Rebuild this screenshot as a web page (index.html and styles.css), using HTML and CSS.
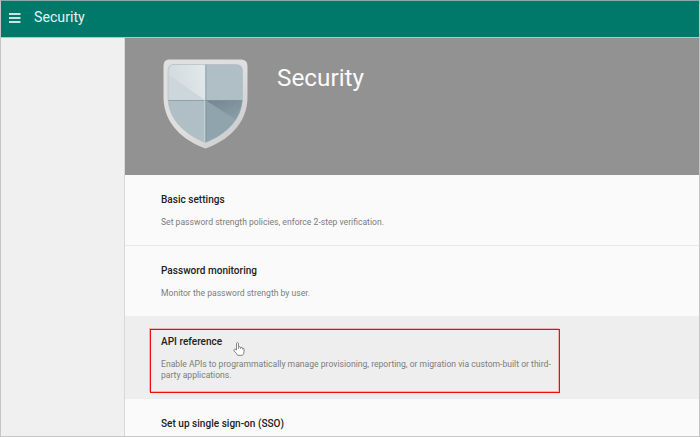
FILE: index.html
```html
<!DOCTYPE html>
<html lang="en">
<head>
<meta charset="utf-8">
<title>Security</title>
<link rel="stylesheet" href="styles.css">
</head>
<body>
<div class="app">
  <header class="topbar">
    <svg class="menu" width="12" height="10" viewBox="0 0 12 10"><path d="M0 1h11.500M0 5h11.500M0 9h11.500" stroke="#c8e4e0" stroke-width="1.800"/></svg>
    <span class="topbar-title">Security</span>
  </header>
  <div class="body">
    <aside class="side"></aside>
    <main class="main">
      <section class="hero">
        <svg class="shield" width="86" height="92" viewBox="0 0 86 92">
          <defs>
            <linearGradient id="rim" x1="0" y1="0" x2="1" y2="1"><stop offset="0" stop-color="#e0e0e0"/><stop offset=".55" stop-color="#dedede"/><stop offset="1" stop-color="#c6c6c6"/></linearGradient>
            <linearGradient id="shine" x1="0" y1=".6" x2="1" y2=".3"><stop offset="0" stop-color="#cdd7db"/><stop offset="1" stop-color="#e3e9eb"/></linearGradient>
            <linearGradient id="shade" x1="0" y1="0" x2=".7" y2="1"><stop offset="0" stop-color="#748791"/><stop offset="1" stop-color="#90a4ae"/></linearGradient>
            <clipPath id="inner"><path d="M11 5.500H73Q79.500 5.500 79.500 12V38C79.500 61 62 76 42.500 83.500C23 76 5 61 5 38V12Q5 5.500 11 5.500Z"/></clipPath>
          </defs>
          <path d="M6 .5H78Q84.500.5 84.500 7V38C84.500 65 64 82 42.500 89.500C21 82 .5 65 .5 38V7Q.5.5 6 .5Z" fill="url(#rim)"/>
          <g clip-path="url(#inner)">
            <path d="M0 0H86V92H0Z" fill="#b0bec5"/>
            <path d="M0 0H42.500V41.500H0Z" fill="#cdd7db"/>
            <path d="M0 12V0H42.500V41.500Z" fill="url(#shine)"/>
            <path d="M43 41.500H86V92H43Z" fill="#90a4ae"/>
            <path d="M43 41.500H86V69Z" fill="url(#shade)"/>
            <path d="M42.800 5V85" stroke="#758b96" stroke-opacity=".75"/>
            <path d="M5 41.500H80" stroke="#758b96" stroke-opacity=".65"/>
            <path d="M41.700 5V85" stroke="#dce4e7" stroke-opacity=".6"/>
          </g>
          <path d="M11 5.500H73Q79.500 5.500 79.500 12V38C79.500 61 62 76 42.500 83.500C23 76 5 61 5 38V12Q5 5.500 11 5.500Z" fill="none" stroke="#a9b6bb" stroke-width=".5"/>
        </svg>
        <h1 class="hero-title">Security</h1>
      </section>
      <section class="row">
        <h2 class="name">Basic settings</h2>
        <p class="desc">Set password strength policies, enforce 2-step verification.</p>
      </section>
      <section class="row last-before-active">
        <h2 class="name">Password monitoring</h2>
        <p class="desc">Monitor the password strength by user.</p>
      </section>
      <section class="row active">
        <h2 class="name">API reference</h2>
        <p class="desc">Enable APIs to programmatically manage provisioning, reporting, or migration via custom-built or third-<br>party applications.</p>
        <div class="highlight"></div>
        <svg class="cursor" width="12" height="14" viewBox="0 0 12 14"><path d="M3.500 8V1.700Q3.500.6 4.500.6T5.500 1.700V5Q7.400 4.300 7.500 5.500Q9.400 4.800 9.500 6.200Q11 5.800 11 7.200V9.500Q11 12 9.500 13.300H4.700Q3.600 11.400 1.100 8.900Q.5 7.600 1.600 7.200Q2.600 7 3.500 8Z" fill="#fff" stroke="#77777f" stroke-width=".9"/><path d="M5.500 5V7M7.500 5.500V7M9.500 6.200V7.500" stroke="#77777f" stroke-width=".7"/></svg>
      </section>
      <section class="row">
        <h2 class="name">Set up single sign-on (SSO)</h2>
      </section>
    </main>
  </div>
</div>
</body>
</html>
```
FILE: styles.css
```css
* { box-sizing: border-box; }
body { margin: 0; font-family: Roboto, "Liberation Sans", sans-serif; }
.app { width: 700px; height: 437px; border: 1px solid #c6c6c6; border-top-color: #84aaa4; display: flex; flex-direction: column; overflow: hidden; }
.topbar { height: 36px; flex: none; background: #00796b; display: flex; align-items: center; padding: 0 0 4px 8px; }
.menu { margin-top: 1px; }
.topbar-title { margin-left: 13px; font-size: 14.2px; line-height: 20px; color: #e6f2f0; }
.body { flex: 1; min-height: 0; display: flex; border-top: 1px solid #b5c4c1; }
.side { width: 124px; flex: none; background: #f0f0f0; border-right: 1px solid #d8d8d8; }
.main { flex: 1; background: #fafafa; }
.hero { height: 137px; background: #929292; display: flex; align-items: flex-start; padding: 21px 0 0 37.5px; }
.shield { flex: none; }
.hero-title { margin: 3px 0 0 28.5px; font-size: 24.3px; line-height: 32px; font-weight: 400; color: #fafafa; }
.row { position: relative; height: 71px; padding: 18px 0 0 36px; border-bottom: 1px solid #e8e8e8; }
.last-before-active { height: 70px; border-bottom: 0; }
.active { height: 83px; padding-top: 19px; background: #eee; border-bottom: 0; }
.name { margin: 0; font-size: 10.05px; letter-spacing: .01px; line-height: 14px; font-weight: 500; color: #212121; }
.desc { margin: 10px 0 0; font-size: 8.6px; line-height: 11px; color: #7c7c7c; white-space: nowrap; }
.highlight { position: absolute; left: 25px; top: 13px; width: 410px; height: 64px; border: 1px solid #ee0a0e; box-shadow: -1px -1px 0 #efb0b0, inset -1px -1px 0 #efb0b0; }
.cursor { position: absolute; left: 108px; top: 26px; }
```
